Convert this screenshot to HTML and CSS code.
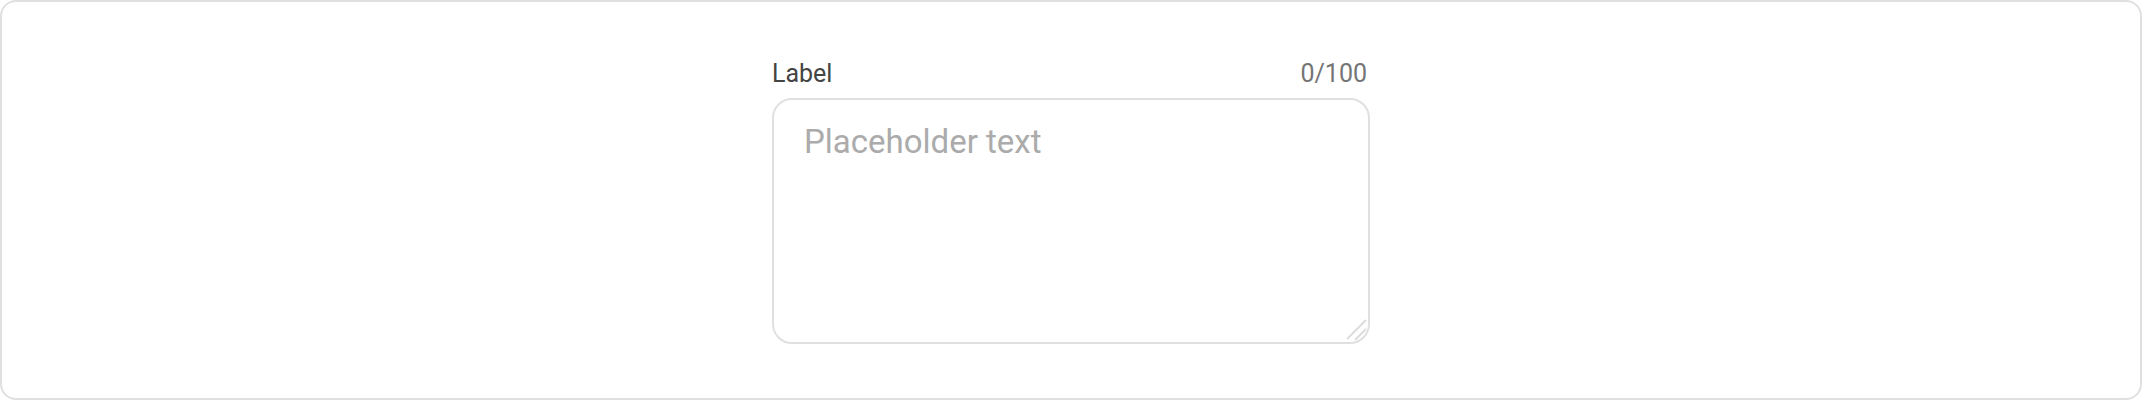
FILE: index.html
```html
<!DOCTYPE html>
<html lang="en">

<head>
  <meta charset="UTF-8">
  <meta name="viewport" content="width=device-width, initial-scale=1.0">
  <title>Textarea</title>
  <link rel="stylesheet" href="styles.css">
</head>

<body>

  <div class="frame">
    <!-- Textarea field with label and counter -->
    <div class="field">
      <div class="field-header">
        <label for="message" class="field-label">Label</label>
        <span class="field-counter" id="counter">0/100</span>
      </div>
      <div class="field-box">
        <textarea id="message" class="field-input" maxlength="100" placeholder="Placeholder text"></textarea>
        <svg class="resize-handle" width="24" height="24" viewBox="0 0 24 24">
          <line x1="3" y1="22" x2="22" y2="3" />
          <line x1="11" y1="23" x2="22" y2="12" />
        </svg>
      </div>
    </div>
  </div>

  <script>
    const input = document.getElementById('message');
    const counter = document.getElementById('counter');

    input.addEventListener('input', () => {
      counter.textContent = `${input.value.length}/100`;
    });
  </script>

</body>

</html>
```

FILE: styles.css
```css
/* Global Styles */
body,
html {
  margin: 0;
  padding: 0;
  height: 100%;
  font-family: Roboto, 'Liberation Sans', sans-serif;
  background-color: #fff;
}

.frame {
  box-sizing: border-box;
  height: 100%;
  padding-top: 52px;
  border: 2px solid #e0e0e0;
  border-radius: 16px;
}

/* Field Styles */
.field {
  width: 598px;
  margin: 0 auto;
}

.field-header {
  display: flex;
  justify-content: space-between;
  align-items: baseline;
  margin-bottom: 5px;
  line-height: 39px;
}

.field-label {
  font-size: 25px;
  color: #444;
}

.field-counter {
  font-size: 25px;
  color: #757575;
  padding-right: 3px;
}

.field-box {
  position: relative;
}

.field-input {
  display: block;
  box-sizing: border-box;
  width: 100%;
  height: 246px;
  padding: 18px 30px;
  border: 2px solid #e0e0e0;
  border-radius: 20px;
  font-family: inherit;
  font-size: 33px;
  line-height: 48px;
  color: #333;
  resize: none;
  outline: none;
}

.field-input::placeholder {
  color: #ababab;
}

.resize-handle {
  position: absolute;
  right: 2px;
  bottom: 3px;
  pointer-events: none;
}

.resize-handle line {
  stroke: #dcdcdc;
  stroke-width: 2;
}
```
